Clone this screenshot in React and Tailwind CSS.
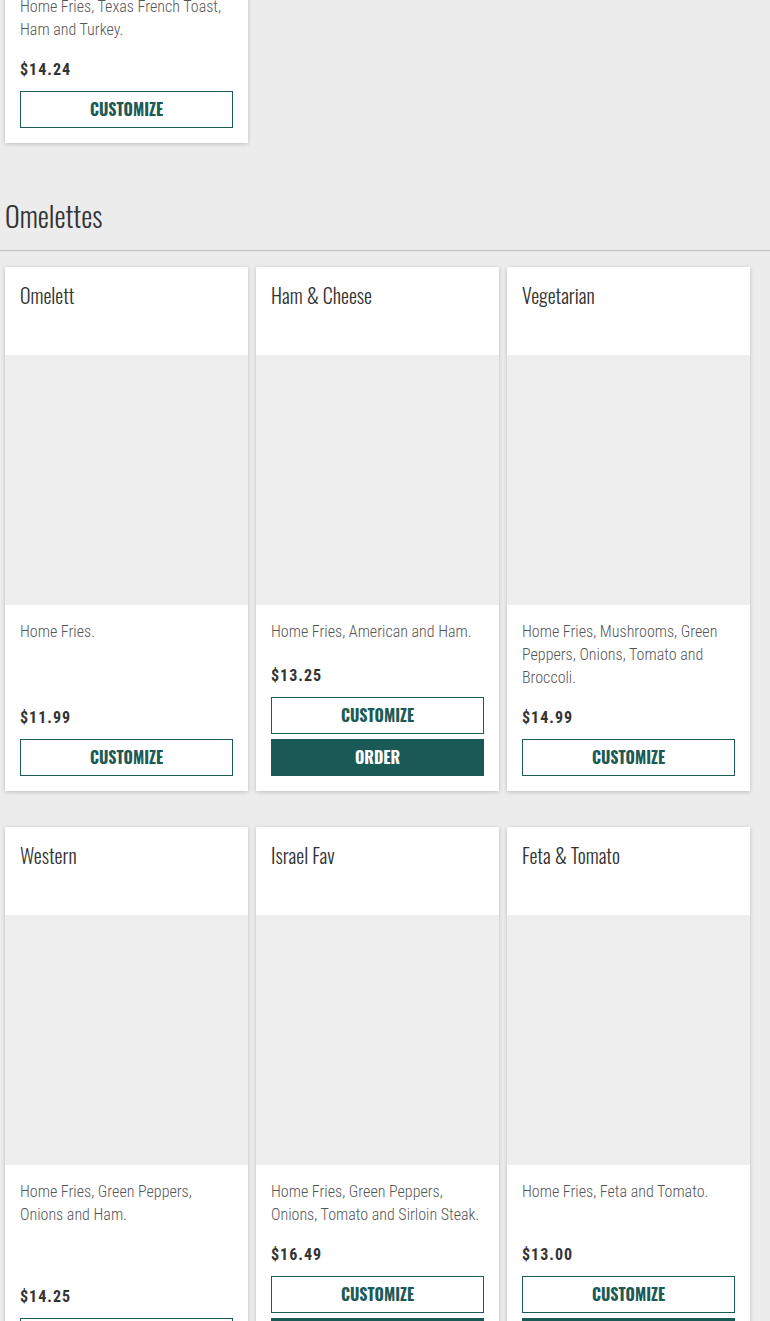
import React from 'react';

const body = { fontFamily: '"Roboto Condensed", "Liberation Sans Narrow", "DejaVu Sans Condensed", Roboto, sans-serif' };
const head = { fontFamily: 'Oswald, "Liberation Sans Narrow", "DejaVu Sans Condensed", Roboto, sans-serif' };

const rows = [
  [
    { name: 'Omelett', desc: 'Home Fries.', price: '$11.99', order: false },
    { name: 'Ham & Cheese', desc: 'Home Fries, American and Ham.', price: '$13.25', order: true },
    { name: 'Vegetarian', desc: 'Home Fries, Mushrooms, Green Peppers, Onions, Tomato and Broccoli.', price: '$14.99', order: false },
  ],
  [
    { name: 'Western', desc: 'Home Fries, Green Peppers, Onions and Ham.', price: '$14.25', order: false },
    { name: 'Israel Fav', desc: 'Home Fries, Green Peppers, Onions, Tomato and Sirloin Steak.', price: '$16.49', order: true },
    { name: 'Feta & Tomato', desc: 'Home Fries, Feta and Tomato.', price: '$13.00', order: true },
  ],
];

const Card = ({ item }) => (
  <div className="w-[243px] bg-white shadow-[0_1px_4px_rgba(0,0,0,0.2)] flex flex-col">
    <div className="h-[88px] px-[15px] pt-[14px]">
      <h3 className="text-[20px] leading-[28px] font-light text-[#333]" style={head}>{item.name}</h3>
    </div>
    <div className="h-[250px] bg-[#eeeeee]" />
    <div className="flex-1 flex flex-col px-[15px] pt-[15px] pb-[15px]">
      <p className="text-[16px] leading-[23px] font-light text-[#555]" style={body}>{item.desc}</p>
      <div className="mt-auto pt-[18px]">
        <div className="text-[16px] leading-[22px] font-bold tracking-[1px] text-[#333]" style={body}>{item.price}</div>
        <div className="mt-[10px] flex flex-col gap-[5px]">
          <button className="h-[37px] w-full pb-[2px] border border-[#1c5a56] bg-white text-[#1c5a56] text-[16px] font-bold uppercase leading-none" style={head}>Customize</button>
          {item.order && (
            <button className="h-[37px] w-full pb-[2px] bg-[#1a5a56] text-white text-[16px] font-bold uppercase leading-none" style={head}>Order</button>
          )}
        </div>
      </div>
    </div>
  </div>
);

export default function App() {
  return (
    <div className="h-[1321px] overflow-hidden bg-[#ececec]">
      <div className="pl-[5px] mt-[-358px]">
        <Card item={{ name: 'Pancake Combo', desc: 'Home Fries, Texas French Toast, Ham and Turkey.', price: '$14.24', order: false }} />
      </div>
      <div className="mt-[53px] border-b border-[#bdbdbd] pl-[5px] pb-[14px]">
        <h2 className="text-[28px] leading-[40px] font-light text-[#333]" style={head}>Omelettes</h2>
      </div>
      <div className="pl-[5px] pt-[16px] flex flex-col gap-[36px]">
        {rows.map((row, i) => (
          <div key={i} className="flex gap-[8px] items-stretch">
            {row.map((item) => <Card key={item.name} item={item} />)}
          </div>
        ))}
      </div>
    </div>
  );
}
